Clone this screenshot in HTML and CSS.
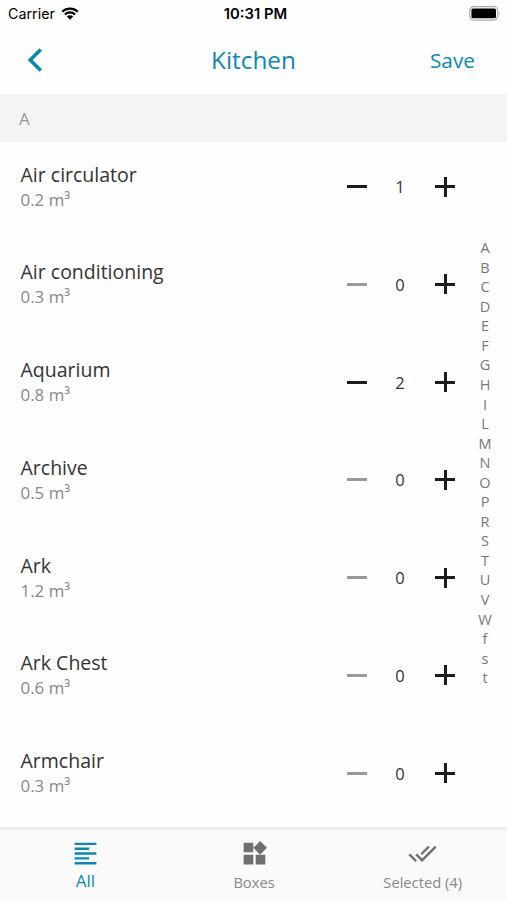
FILE: index.html
```html
<!DOCTYPE html>
<html lang="en">
<head>
  <meta charset="UTF-8">
  <meta name="viewport" content="width=device-width, initial-scale=1.0">
  <title>Kitchen</title>
  <link rel="stylesheet" href="styles.css">
</head>
<body>
  <div class="status">
    <div class="carrier">
      <span>Carrier</span>
      <svg width="18" height="13" viewBox="0 0 18 13">
        <path d="M1.2 4.7a11.2 11.2 0 0 1 15.6 0M3.9 7.5a7.4 7.4 0 0 1 10.2 0" fill="none" stroke="#000" stroke-width="2.2"/>
        <path d="M9 12.8L5.8 9.5a4.6 4.6 0 0 1 6.4 0z"/>
      </svg>
    </div>
    <div class="time">10:31 PM</div>
    <div class="battery">
      <svg width="32" height="15" viewBox="0 0 32 15">
        <rect x="0.7" y="0.7" width="28" height="13.4" rx="4" fill="#fff" stroke="#aaa" stroke-width="1.2"/>
        <rect x="2.4" y="2.6" width="24.6" height="9.6" rx="1.5"/>
        <path d="M30 5.3q1.6 2 0 4.2z" fill="#aaa"/>
      </svg>
    </div>
  </div>

  <header class="navbar">
    <button class="back" aria-label="Back">
      <svg width="16" height="24" viewBox="0 0 16 24"><path d="M13.8 1.4L3.2 12l10.6 10.6" fill="none" stroke="currentColor" stroke-width="3.6"/></svg>
    </button>
    <h1>Kitchen</h1>
    <button class="save">Save</button>
  </header>

  <div class="section">A</div>

  <main>
    <ul class="items" id="items"></ul>
    <nav class="letters" id="letters"></nav>
  </main>

  <footer class="tabs">
    <a class="tab active">
      <svg width="29" height="29" viewBox="0 0 24 24"><path d="M3 3h18v2H3zM3 7h12v2H3zM3 11h18v2H3zM3 15h12v2H3zM3 19h18v2H3z"/></svg>
      <span>All</span>
    </a>
    <a class="tab">
      <svg width="29" height="29" viewBox="0 0 24 24"><path d="M13 13v8h8v-8zM3 21h8v-8H3zM3 3v8h8V3zM16.66 1.69L11 7.34 16.66 13l5.65-5.66z"/></svg>
      <span>Boxes</span>
    </a>
    <a class="tab">
      <svg width="29" height="29" viewBox="0 0 24 24"><path d="M18 7l-1.41-1.41-6.34 6.34 1.41 1.41L18 7zm4.24-1.41L11.66 16.17 7.48 12l-1.41 1.41L11.66 19l12-12-1.42-1.41zM.41 13.41L6 19l1.41-1.41L1.83 12 .41 13.41z"/></svg>
      <span>Selected (4)</span>
    </a>
  </footer>

  <script>
    const items = [
      ['Air circulator', '0.2', 1],
      ['Air conditioning', '0.3', 0],
      ['Aquarium', '0.8', 2],
      ['Archive', '0.5', 0],
      ['Ark', '1.2', 0],
      ['Ark Chest', '0.6', 0],
      ['Armchair', '0.3', 0]
    ];

    document.getElementById('items').innerHTML = items.map(([name, size, count]) => `
      <li class="item">
        <div class="info">
          <div class="name">${name}</div>
          <div class="size">${size} m³</div>
        </div>
        <div class="stepper">
          <button class="minus" aria-label="Remove" ${count ? '' : 'disabled'}></button>
          <span class="count">${count}</span>
          <button class="plus" aria-label="Add"></button>
        </div>
      </li>`).join('');

    document.getElementById('letters').innerHTML =
      [...'ABCDEFGHILMNOPRSTUVWfst'].map(l => `<a>${l}</a>`).join('');
  </script>
</body>
</html>
```

FILE: styles.css
```css
* {
  box-sizing: border-box;
}

body {
  margin: 0;
  height: 100vh;
  display: flex;
  flex-direction: column;
  overflow: hidden;
  background-color: #fefefe;
  color: #333;
  font-family: "Open Sans", sans-serif;
}

button {
  padding: 0;
  border: 0;
  background: none;
  font: inherit;
  color: inherit;
}

.status {
  display: grid;
  grid-template-columns: 1fr auto 1fr;
  align-items: center;
  height: 27px;
  padding: 0 6px 0 8px;
  color: #000;
  font-family: Inter, sans-serif;
  font-size: 14.3px;
}

.carrier {
  display: flex;
  align-items: center;
  gap: 6px;
}

.time {
  padding-left: 2px;
  font-size: 14.8px;
  font-weight: 600;
}

.battery {
  display: flex;
  justify-content: flex-end;
}

.navbar {
  display: grid;
  grid-template-columns: 1fr auto 1fr;
  align-items: center;
  height: 67px;
  padding: 0 32px 1px 27px;
  color: #0c88b3;
}

.navbar h1 {
  margin: 0;
  padding: 0 0 2px 5px;
  font-size: 24.3px;
  font-weight: 400;
}

.back {
  display: flex;
}

.save {
  justify-self: end;
  font-size: 20.8px;
}

.section {
  height: 48px;
  padding-left: 19px;
  background-color: #f2f4f6;
  color: #999;
  font-size: 17px;
  line-height: 49px;
}

main {
  display: flex;
  flex: 1;
  min-height: 0;
}

.items {
  flex: 1;
  margin: 0;
  padding: 0 0 0 20.5px;
  list-style: none;
}

.item {
  display: flex;
  justify-content: space-between;
  height: 97.75px;
  padding-top: 19.7px;
}

.name {
  font-size: 19.5px;
  line-height: 26px;
}

.size {
  color: #888;
  font-size: 16.9px;
  line-height: 24px;
}

.stepper {
  display: flex;
  align-items: center;
  height: 50px;
}

.minus,
.plus {
  width: 20px;
  height: 20px;
  background: linear-gradient(#1c1c1c, #1c1c1c) center / 20px 3px no-repeat;
}

.minus:disabled {
  background-image: linear-gradient(#999, #999);
}

.plus {
  background: linear-gradient(#1c1c1c, #1c1c1c) center / 20px 3px no-repeat, linear-gradient(#1c1c1c, #1c1c1c) center / 3px 20px no-repeat;
}

.count {
  width: 68px;
  padding-right: 2px;
  font-size: 16.5px;
  text-align: center;
}

.letters {
  display: flex;
  flex-direction: column;
  width: 52px;
  padding: 96.2px 0 0 8px;
  color: #777;
  font-size: 14.5px;
  line-height: 19.55px;
  text-align: center;
}

.tabs {
  display: flex;
  height: 73px;
  border-top: 3px solid #eee;
  background-color: #fafafa;
}

.tab {
  flex: 1;
  display: flex;
  flex-direction: column;
  align-items: center;
  padding-top: 9px;
  color: #888;
  font-size: 14.7px;
  line-height: 28px;
}

.tab svg {
  fill: #707070;
}

.tab.active {
  padding-left: 1px;
  color: #0c88b3;
  font-size: 17px;
  line-height: 25px;
}

.tab.active svg {
  fill: #0c88b3;
}
```
